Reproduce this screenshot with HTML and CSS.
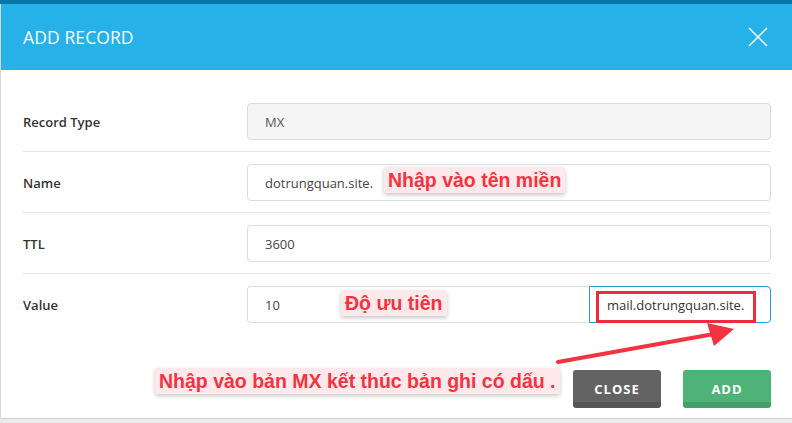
FILE: index.html
```
<!DOCTYPE html>
<html lang="vi">
<head>
<meta charset="utf-8">
<title>Add Record</title>
<link rel="stylesheet" href="styles.css">
</head>
<body>
<div class="topstrip"></div>
<div class="modal">
  <div class="modal-header">
    <h2 class="title">ADD RECORD</h2>
    <svg class="close-x" width="20" height="20" viewBox="0 0 20 20"><path d="M1 1L19 19M19 1L1 19" stroke="#fff" stroke-width="1.5" fill="none"/></svg>
  </div>
  <div class="modal-body">
    <div class="row">
      <div class="label">Record Type</div>
      <div class="field"><div class="input disabled">MX</div></div>
    </div>
    <div class="row">
      <div class="label">Name</div>
      <div class="field"><div class="input">dotrungquan.site.</div></div>
    </div>
    <div class="row">
      <div class="label">TTL</div>
      <div class="field"><div class="input">3600</div></div>
    </div>
    <div class="row last">
      <div class="label">Value</div>
      <div class="field split">
        <div class="input prio">10</div>
        <div class="input focus">mail.dotrungquan.site.</div>
      </div>
    </div>
  </div>
  <div class="modal-footer">
    <button class="btn btn-close">CLOSE</button>
    <button class="btn btn-add">ADD</button>
  </div>
</div>
<div class="note note-name">Nhập vào tên miền</div>
<div class="note note-prio">Độ ưu tiên</div>
<div class="note note-mx">Nhập vào bản MX kết thúc bản ghi có dấu .</div>
<svg class="overlay" width="792" height="423" viewBox="0 0 792 423">
  <rect x="597.5" y="292.5" width="157" height="29" fill="none" stroke="#ee2b3b" stroke-width="3"/>
  <line x1="558" y1="362" x2="714" y2="334" stroke="#f3333f" stroke-width="4" stroke-linecap="round"/>
  <polygon points="734,329 707,323 714,346" fill="#f3333f"/>
</svg>
</body>
</html>
```
FILE: styles.css
```
* { box-sizing: border-box; }
html, body { margin: 0; padding: 0; }
body {
  width: 792px;
  height: 423px;
  overflow: hidden;
  background: #ececec;
  font-family: "Open Sans", "Liberation Sans", sans-serif;
  position: relative;
}
.topstrip {
  height: 4px;
  background: #0a76a8;
}
.modal {
  background: #fff;
  border-bottom: 1px solid #d0d0d0;
  border-left: 1px solid #d8d8d8;
}
.modal-header {
  height: 66px;
  background: #26b1e8;
  display: flex;
  align-items: center;
  justify-content: space-between;
  padding: 0 24px 0 22px;
}
.title {
  margin: 0;
  color: #fff;
  font-size: 17.5px;
  font-weight: 400;
  letter-spacing: 0.1px;
}
.close-x { display: block; }
.modal-body {
  padding: 21px 21px 0 22px;
}
.row {
  display: grid;
  grid-template-columns: 224px 1fr;
  align-items: center;
  padding: 12px 0 11px;
  border-bottom: 1px solid #e6e6e6;
}
.row.last { border-bottom: none; }
.label {
  font-size: 13px;
  font-weight: 600;
  color: #333;
}
.field { display: flex; }
.input {
  flex: 1;
  height: 37px;
  border: 1px solid #dcdcdc;
  border-radius: 4px;
  padding-left: 17px;
  display: flex;
  align-items: center;
  font-size: 13px;
  color: #444;
  background: #fff;
}
.input.disabled { background: #f5f5f5; color: #555; }
.input.prio { border-radius: 4px 0 0 4px; border-right: none; }
.input.focus {
  flex: 0 0 182px;
  border-color: #2a9bd4;
  border-radius: 0 4px 4px 0;
  color: #333;
}
.modal-footer {
  display: flex;
  justify-content: flex-end;
  gap: 22px;
  padding: 36px 21px 10px 0;
}
.btn {
  width: 88px;
  height: 38px;
  border: none;
  border-radius: 3px;
  color: #fff;
  font-family: "Open Sans", "Liberation Sans", sans-serif;
  font-size: 13px;
  font-weight: 700;
  letter-spacing: 1px;
  padding: 0;
}
.btn-close {
  background: linear-gradient(#636363 0, #636363 32px, #555 32px, #555 100%);
}
.btn-add {
  background: linear-gradient(#4db376 0, #4db376 32px, #43a068 32px, #43a068 100%);
}
.note {
  position: absolute;
  height: 26px;
  line-height: 26px;
  padding: 0 4px;
  background: #fde9eb;
  color: #f3333f;
  font-family: "Liberation Sans", Arial, sans-serif;
  font-weight: 700;
  font-size: 19.5px;
  border-radius: 2px;
  box-shadow: 0 2px 4px rgba(0,0,0,0.22);
  white-space: nowrap;
}
.note-name { left: 384px; top: 167px; }
.note-prio { left: 341px; top: 290px; }
.note-mx { left: 155px; top: 368px; }
.overlay {
  position: absolute;
  left: 0;
  top: 0;
  pointer-events: none;
}
```
